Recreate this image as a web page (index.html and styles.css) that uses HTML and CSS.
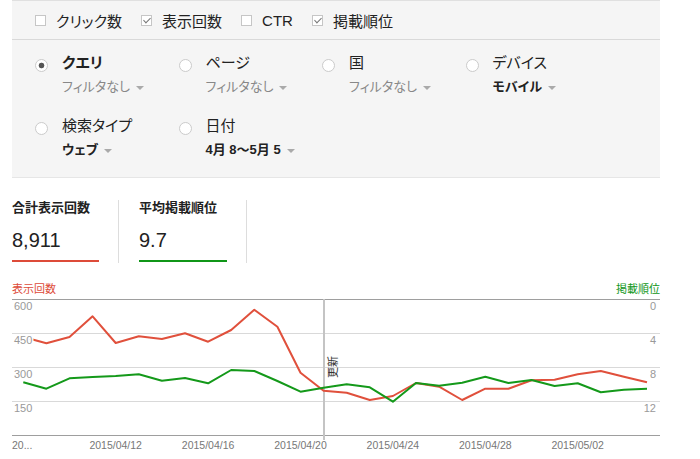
FILE: index.html
```html
<!DOCTYPE html>
<html lang="ja">
<head>
    <meta charset="UTF-8">
    <meta name="viewport" content="width=device-width, initial-scale=1.0">
    <title>検索アナリティクス</title>
    <link rel="stylesheet" href="styles.css">
</head>
<body>
<div class="panel">
    <div class="metrics-bar">
        <label class="check"><span class="box"></span>クリック数</label>
        <label class="check on"><span class="box"></span>表示回数</label>
        <label class="check"><span class="box"></span>CTR</label>
        <label class="check on"><span class="box"></span>掲載順位</label>
    </div>

    <div class="groups">
        <div class="group">
            <span class="radio selected"></span>
            <div>
                <div class="group-name bold">クエリ</div>
                <div class="group-filter">フィルタなし<span class="caret"></span></div>
            </div>
        </div>
        <div class="group">
            <span class="radio"></span>
            <div>
                <div class="group-name">ページ</div>
                <div class="group-filter">フィルタなし<span class="caret"></span></div>
            </div>
        </div>
        <div class="group">
            <span class="radio"></span>
            <div>
                <div class="group-name">国</div>
                <div class="group-filter">フィルタなし<span class="caret"></span></div>
            </div>
        </div>
        <div class="group">
            <span class="radio"></span>
            <div>
                <div class="group-name">デバイス</div>
                <div class="group-filter active">モバイル<span class="caret"></span></div>
            </div>
        </div>
        <div class="group">
            <span class="radio"></span>
            <div>
                <div class="group-name">検索タイプ</div>
                <div class="group-filter active">ウェブ<span class="caret"></span></div>
            </div>
        </div>
        <div class="group">
            <span class="radio"></span>
            <div>
                <div class="group-name">日付</div>
                <div class="group-filter active">4月 8〜5月 5<span class="caret"></span></div>
            </div>
        </div>
    </div>
</div>

<div class="totals">
    <div class="total">
        <div class="total-title">合計表示回数</div>
        <div class="total-value red-line">8,911</div>
    </div>
    <div class="total second">
        <div class="total-title">平均掲載順位</div>
        <div class="total-value green-line">9.7</div>
    </div>
</div>

<div class="chart">
    <div class="chart-head">
        <span class="red">表示回数</span>
        <span class="green">掲載順位</span>
    </div>
    <svg class="chart-svg" width="648" height="163" viewBox="0 0 648 163">
        <g class="grid">
            <line x1="0" y1="37.5" x2="648" y2="37.5"/>
            <line x1="0" y1="71.5" x2="648" y2="71.5"/>
            <line x1="0" y1="105.5" x2="648" y2="105.5"/>
        </g>
        <line class="axis" x1="0" y1="3.5" x2="648" y2="3.5"/>
        <line class="axis" x1="0" y1="139.5" x2="648" y2="139.5"/>

        <line class="note-line" x1="312" y1="3" x2="312" y2="144"/>
        <text class="note" transform="translate(325,82) rotate(-90)">更新</text>

        <polyline class="series red-series" points="11.3,41 34.4,47.3 57.5,41 80.6,20.3 103.7,47 126.8,40.3 149.9,43 173,37.3 196.1,45.7 219.2,34 242.3,13.7 265.4,30.7 288.5,76.7 311.6,94.7 334.7,96.7 357.8,104 380.9,100 404,87 427.1,90.7 450.2,104 473.3,92.7 496.4,92.7 519.5,84.3 542.6,83.7 565.7,78.3 588.8,75 611.9,80.7 635,86.3"/>
        <polyline class="series green-series" points="11.3,86.3 34.4,92.7 57.5,82.3 80.6,81 103.7,80 126.8,78.3 149.9,84.7 173,82 196.1,87.3 219.2,74 242.3,75 265.4,85 288.5,95.7 311.6,91.7 334.7,88.3 357.8,91.3 380.9,105.7 404,87 427.1,89.7 450.2,86.7 473.3,80.7 496.4,87 519.5,84 542.6,90 565.7,87.3 588.8,96.3 611.9,93.7 635,92.7"/>

        <g class="tick">
            <text x="2" y="14">600</text>
            <text x="2" y="48">450</text>
            <text x="2" y="82">300</text>
            <text x="2" y="116">150</text>
        </g>
        <g class="tick right">
            <text x="644" y="14">0</text>
            <text x="644" y="48">4</text>
            <text x="644" y="82">8</text>
            <text x="644" y="116">12</text>
        </g>
        <g class="date">
            <text x="0" y="153" class="first">20...</text>
            <text x="103.7" y="153">2015/04/12</text>
            <text x="196.1" y="153">2015/04/16</text>
            <text x="288.5" y="153">2015/04/20</text>
            <text x="380.9" y="153">2015/04/24</text>
            <text x="473.3" y="153">2015/04/28</text>
            <text x="565.7" y="153">2015/05/02</text>
        </g>
    </svg>
</div>
</body>
</html>
```

FILE: styles.css
```css
*{
    padding: 0;
    margin: 0;
    box-sizing: border-box;
}
html, body{
    background: #fff;
}
body{
    font-family: "Liberation Sans", "Noto Sans CJK JP", sans-serif;
    font-feature-settings: "palt";
    color: #222;
}

/* filter panel */
.panel{
    margin-left: 12px;
    width: 648px;
    background: #f5f5f5;
    border-top: 1px solid #e0e0e0;
    border-bottom: 1px solid #e6e6e6;
}
.metrics-bar{
    display: flex;
    align-items: center;
    height: 39px;
    padding-left: 23px;
    border-bottom: 1px solid #d9d9d9;
    font-size: 15px;
}
.check{
    display: flex;
    align-items: center;
    margin-right: 19px;
}
.check .box{
    position: relative;
    width: 11px;
    height: 11px;
    margin-right: 10px;
    border: 1px solid #c6c6c6;
    background: #fff;
}
.check.on .box::after{
    content: "";
    position: absolute;
    left: 3px;
    top: 0px;
    width: 3px;
    height: 6px;
    border-right: 1.5px solid #777;
    border-bottom: 1.5px solid #777;
    transform: rotate(45deg);
}

.groups{
    display: grid;
    grid-template-columns: repeat(4, 143.5px);
    row-gap: 19px;
    padding: 12px 0 18px 23px;
}
.group{
    display: flex;
    align-items: flex-start;
}
.radio{
    flex: none;
    width: 13px;
    height: 13px;
    margin: 7px 14px 0 0;
    border: 1px solid #cbcbcb;
    border-radius: 50%;
    background: #fff;
}
.radio.selected{
    background: radial-gradient(circle, #555 0 2.5px, #fff 3.2px);
}
.group-name{
    font-size: 15px;
    line-height: 22px;
}
.bold{
    font-weight: bold;
}
.group-filter{
    margin-top: 4px;
    font-size: 13px;
    line-height: 18px;
    color: #888;
}
.group-filter.active{
    color: #222;
    font-weight: bold;
}
.caret{
    display: inline-block;
    margin-left: 6px;
    vertical-align: middle;
    border-left: 4px solid transparent;
    border-right: 4px solid transparent;
    border-top: 4px solid #aaa;
}

/* totals */
.totals{
    display: flex;
    margin-left: 12px;
    padding-top: 22px;
}
.total{
    width: 107px;
    padding: 0 19px 1px 0;
    border-right: 1px solid #ddd;
}
.total.second{
    width: 128px;
    padding-left: 20px;
}
.total-title{
    font-size: 13px;
    line-height: 15px;
    font-weight: bold;
}
.total-value{
    margin-top: 13px;
    padding-bottom: 8px;
    font-size: 20px;
    line-height: 24px;
}
.red-line{
    border-bottom: 2px solid #dd4b39;
}
.green-line{
    border-bottom: 2px solid #109618;
}

/* chart */
.chart{
    margin: 19px 0 0 12px;
    width: 648px;
}
.chart-head{
    display: flex;
    justify-content: space-between;
    font-size: 11px;
    line-height: 14px;
}
.red{
    color: #dd4b39;
}
.green{
    color: #109618;
}
.chart-svg{
    display: block;
}
.grid line{
    stroke: #d9d9d9;
    stroke-width: 1;
}
.axis{
    stroke: #9e9e9e;
    stroke-width: 1;
}
.note-line{
    stroke: #c4c4c4;
    stroke-width: 2;
}
.note{
    font-size: 11px;
    fill: #333;
}
.series{
    fill: none;
    stroke-width: 2;
    stroke-linejoin: round;
}
.red-series{
    stroke: #e0503c;
}
.green-series{
    stroke: #14991a;
}
.tick text{
    font-size: 11px;
    fill: #999;
    paint-order: stroke;
    stroke: #fff;
    stroke-width: 3px;
}
.tick.right text{
    text-anchor: end;
}
.date text{
    font-size: 10.5px;
    fill: #777;
    text-anchor: middle;
}
.date text.first{
    text-anchor: start;
}
```
